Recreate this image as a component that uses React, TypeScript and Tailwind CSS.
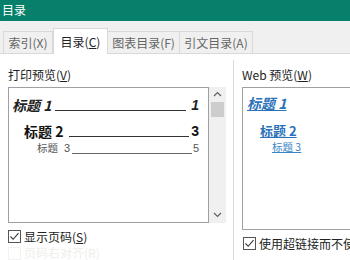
import React from "react";

function Chevron({ up }: { up?: boolean }) {
  return (
    <svg width="9" height="6" viewBox="0 0 9 6" className="block">
      <path
        d={up ? "M1 5 L4.5 1.5 L8 5" : "M1 1 L4.5 4.5 L8 1"}
        fill="none"
        stroke="#606060"
        strokeWidth="1.2"
      />
    </svg>
  );
}

function Check() {
  return (
    <div className="w-[13px] h-[13px] border border-[#555] bg-white flex items-center justify-center shrink-0">
      <svg width="11" height="11" viewBox="0 0 11 11" className="block">
        <path d="M1.5 5.5 L4.2 8.3 L9.5 2.2" fill="none" stroke="#333" strokeWidth="1.1" />
      </svg>
    </div>
  );
}

export default function App() {
  return (
    <div className="w-[350px] h-[260px] overflow-hidden bg-white font-['Noto_Sans_CJK_SC',sans-serif] text-[12px] text-[#1a1a1a] flex flex-col">
      <div className="h-[21px] shrink-0 bg-[#067f6b] text-white pl-[2px] leading-[19px]">目录</div>
      <div className="h-[33px] shrink-0 bg-[#f0f0f0] border-b border-[#d9d9d9] flex items-end pl-[3px]">
        <div className="w-[50px] h-[22px] border border-b-0 border-[#d9d9d9] text-[#666] flex items-center justify-center leading-[14px]">
          索引(X)
        </div>
        <div className="w-[55px] h-[26px] -mb-px bg-white border border-b-0 border-[#d9d9d9] text-[#222] flex items-center justify-center leading-[14px]">
          目录(<span className="underline">C</span>)
        </div>
        <div className="w-[72px] h-[22px] border border-b-0 border-l-0 border-[#d9d9d9] text-[#666] flex items-center justify-center leading-[14px]">
          图表目录(F)
        </div>
        <div className="w-[73px] h-[22px] border border-b-0 border-l-0 border-[#d9d9d9] text-[#666] flex items-center justify-center leading-[14px]">
          引文目录(A)
        </div>
      </div>
      <div className="flex flex-1 min-h-0 pl-[8px]">
        <div className="w-[218px] shrink-0 pt-[12px] flex flex-col">
          <div className="h-[18px] leading-[18px] text-[#222]">
            打印预览(<span className="underline">V</span>)
          </div>
          <div className="mt-[3px] flex h-[143px]">
            <div className="w-[201px] h-full border border-[#a0a0a0] flex flex-col pr-[9px]">
              <div className="mt-[8px] ml-[3px] h-[18px] flex items-end">
                <span className="text-[14px] leading-[18px] font-bold italic text-[#222]">标题 1</span>
                <div className="flex-1 ml-[4px] mr-[5px] border-b border-[#333] mb-[3px]" />
                <span className="text-[14px] leading-[18px] font-bold italic font-['Liberation_Sans',sans-serif] text-[#222]">1</span>
              </div>
              <div className="mt-[8px] ml-[15px] h-[18px] flex items-end">
                <span className="text-[14px] leading-[18px] font-bold text-[#111]">标题 2</span>
                <div className="flex-1 ml-[6px] mr-[2px] border-b border-[#333] mb-[3px]" />
                <span className="text-[14px] leading-[18px] font-bold font-['Liberation_Sans',sans-serif] text-[#111]">3</span>
              </div>
              <div className="mt-[1px] ml-[28px] h-[14px] flex items-end text-[#555]">
                <span className="text-[10.5px] leading-[14px]">标题</span>
                <span className="text-[11px] leading-[14px] ml-[6px] font-['Liberation_Sans',sans-serif]">3</span>
                <div className="flex-1 ml-[2px] mr-[1px] border-b border-[#666] mb-[1px]" />
                <span className="text-[11px] leading-[14px] font-['Liberation_Sans',sans-serif]">5</span>
              </div>
            </div>
            <div className="w-[17px] h-full bg-[#f0f0f0] flex flex-col items-center">
              <div className="mt-[4px] h-[6px]">
                <Chevron up />
              </div>
              <div className="mt-[5px] w-[13px] h-[15px] bg-[#cdcdcd]" />
              <div className="flex-1" />
              <div className="mb-[5px] h-[6px]">
                <Chevron />
              </div>
            </div>
          </div>
          <div className="mt-[7px] flex items-center h-[13px]">
            <Check />
            <span className="ml-[3px] leading-[14px] text-[#222]">
              显示页码(<span className="underline">S</span>)
            </span>
          </div>
          <div className="mt-[3px] flex items-center h-[14px] text-[#efeee8]">
            <div className="w-[13px] h-[13px] border border-[#f2f2f2] shrink-0" />
            <span className="ml-[3px] leading-[14px]">页码右对齐(R)</span>
          </div>
        </div>
        <div className="ml-[7px] mt-[6px] w-px bg-[#d9d9d9] shrink-0" />
        <div className="ml-[8px] flex-1 min-w-0 pt-[12px] flex flex-col">
          <div className="h-[18px] leading-[18px] text-[#222] whitespace-nowrap">
            Web 预览(<span className="underline">W</span>)
          </div>
          <div className="mt-[3px] h-[143px] w-[140px] shrink-0 border border-[#a0a0a0] flex flex-col">
            <div className="mt-[6px] ml-[4px] h-[18px] leading-[18px] text-[14px] font-bold italic underline text-[#2b72b8] whitespace-nowrap">
              标题 1
            </div>
            <div className="mt-[10px] ml-[17px] h-[18px] leading-[18px] text-[13px] font-bold underline text-[#2b72b8] whitespace-nowrap">
              标题 2
            </div>
            <div className="ml-[29px] h-[14px] leading-[14px] text-[10.5px] underline text-[#3a85c5] whitespace-nowrap">
              标题 3
            </div>
          </div>
          <div className="mt-[7px] flex items-center h-[13px] whitespace-nowrap">
            <div className="ml-[1px]">
              <Check />
            </div>
            <span className="ml-[3px] leading-[14px] text-[#222]">使用超链接而不使用页码(H)</span>
          </div>
        </div>
      </div>
    </div>
  );
}
